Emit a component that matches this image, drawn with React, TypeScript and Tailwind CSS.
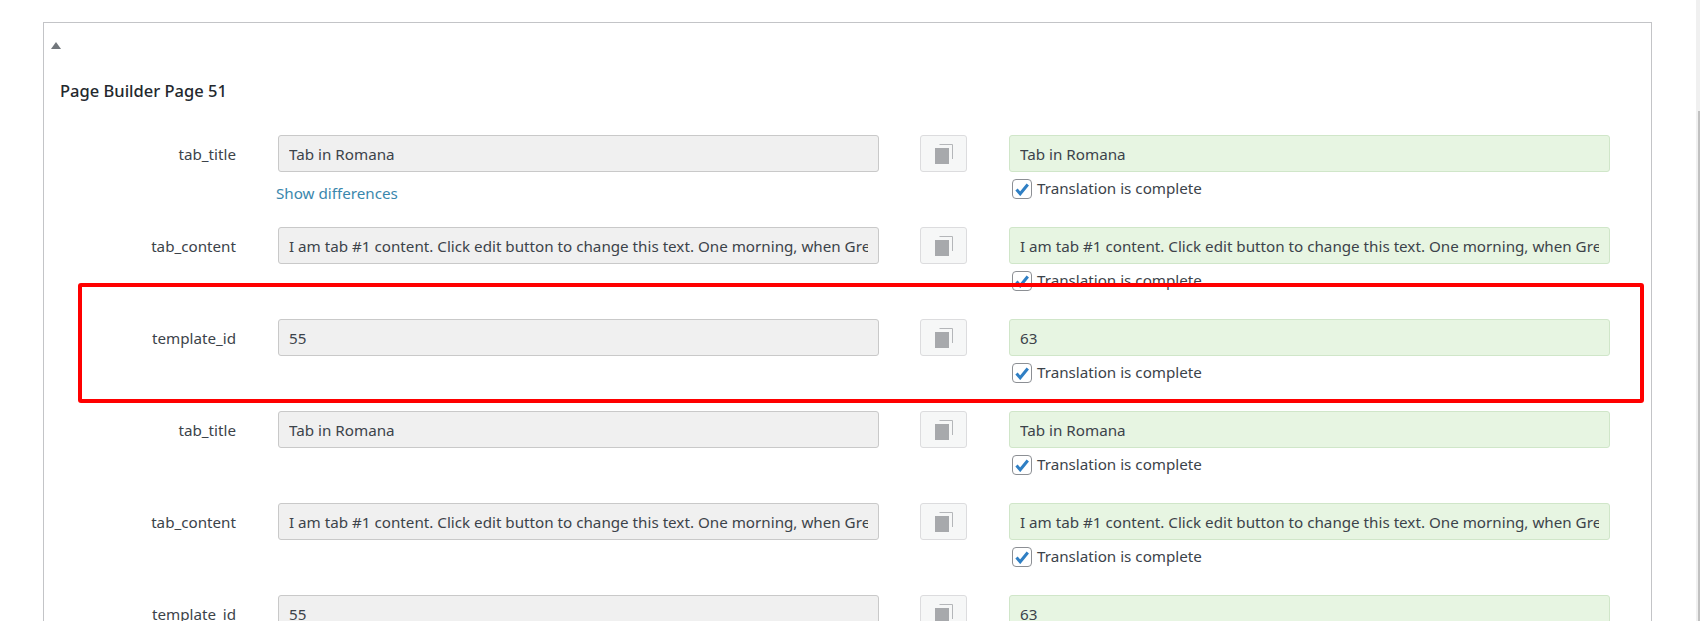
const longText =
  'I am tab #1 content. Click edit button to change this text. One morning, when Gregor Samsa woke from troubled dreams'

const rows = [
  { label: 'tab_title', source: 'Tab in Romana', target: 'Tab in Romana', diff: true },
  { label: 'tab_content', source: longText, target: longText },
  { label: 'template_id', source: '55', target: '63' },
  { label: 'tab_title', source: 'Tab in Romana', target: 'Tab in Romana' },
  { label: 'tab_content', source: longText, target: longText },
  { label: 'template_id', source: '55', target: '63' },
]

function CopyIcon() {
  return (
    <svg width="18" height="20" viewBox="0 0 18 20" fill="none">
      <path d="M4.5 0.5H17.5V15" stroke="#b4b6b9" />
      <rect x="0" y="4" width="14" height="16" fill="#a7a9ac" />
    </svg>
  )
}

function Field({ value, green }: { value: string; green?: boolean }) {
  return (
    <div
      className={`w-[601px] h-[37px] shrink-0 rounded-[3px] border px-[10px] flex items-center ${
        green ? 'bg-[#e7f5e2] border-[#d0e6c9]' : 'bg-[#f0f0f0] border-[#c9c9c9]'
      }`}
    >
      <div className="overflow-hidden whitespace-nowrap w-full">{value}</div>
    </div>
  )
}

function Checkbox() {
  return (
    <span className="w-5 h-5 shrink-0 rounded-[4px] border border-[#8c8f94] bg-white flex items-center justify-center">
      <svg width="14" height="13" viewBox="0 0 14 13" fill="none">
        <path d="M1.5 6.5L5.2 10.8L12.8 1.5" stroke="#2f7fc4" strokeWidth="3" />
      </svg>
    </span>
  )
}

export default function App() {
  return (
    <div className="relative h-screen overflow-hidden bg-white pt-[22px] pl-[43px] pr-[48px] text-[15.2px] leading-5 text-[#3c434a] font-['Noto_Sans',sans-serif]">
      <div className="border border-[#c3c4c7] border-b-0 h-[700px] w-[1609px]">
        <div className="pl-[7px] pt-[19px] h-[52px]">
          <div className="w-0 h-0 border-x-[5px] border-x-transparent border-b-[7px] border-b-[#72777c]" />
        </div>
        <h2 className="pl-4 pt-[5px] h-[47px] text-[16.5px] leading-[22px] font-medium text-[#23282d]">
          Page Builder Page 51
        </h2>
        <div className="pt-[13px]">
          {rows.map((row, i) => (
            <div key={i} className="flex h-[92px]">
              <div className="w-[192px] h-[37px] shrink-0 flex items-center justify-end">{row.label}</div>
              <div className="ml-[42px] w-[601px] shrink-0">
                <Field value={row.source} />
                {row.diff && <div className="-ml-[2px] mt-[11px] text-[#3a87ad]">Show differences</div>}
              </div>
              <div className="ml-[41px] w-[47px] h-[37px] shrink-0 rounded-[3px] border border-[#dcdcde] bg-[#f6f7f7] flex items-center justify-center">
                <CopyIcon />
              </div>
              <div className="ml-[42px] w-[601px] shrink-0">
                <Field value={row.target} green />
                <div className="mt-[7px] ml-[3px] flex items-center gap-[5px]">
                  <Checkbox />
                  <span className="-mt-[2px]">Translation is complete</span>
                </div>
              </div>
            </div>
          ))}
        </div>
      </div>

      {/* red highlight drawn over the row */}
      <div className="absolute left-[78px] top-[283px] w-[1566px] h-[120px] rounded-[3px] border-4 border-[#ff0000]" />

      {/* scrollbar */}
      <div className="absolute right-0 top-0 bottom-0 w-1 bg-[#f0f0f0]">
        <div className="absolute top-[111px] bottom-0 right-0 w-[2px] bg-[#c1c1c1]" />
      </div>
    </div>
  )
}
